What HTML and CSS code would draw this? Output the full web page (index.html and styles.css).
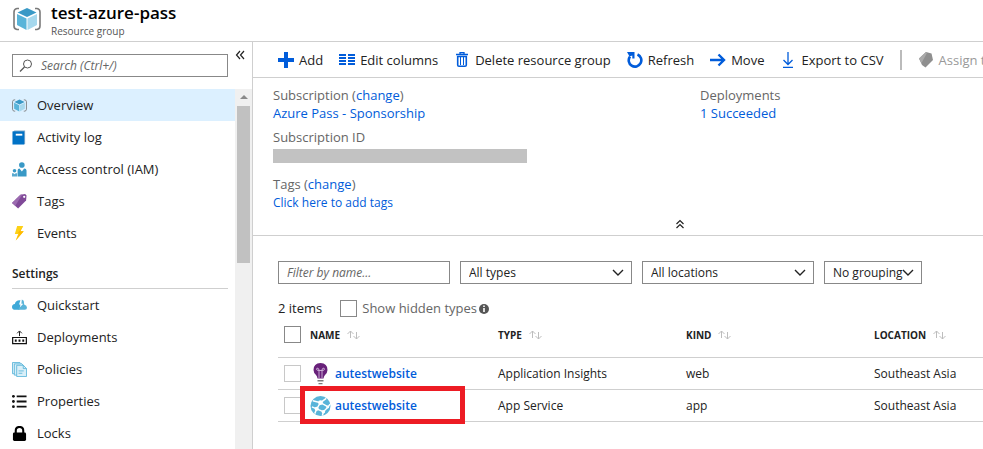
FILE: index.html
```html
<!DOCTYPE html>
<html lang="en">
<head>
<meta charset="utf-8">
<title>test-azure-pass</title>
<link rel="stylesheet" href="styles.css">
</head>
<body>
<svg class="defs" aria-hidden="true">
  <symbol id="group" viewBox="0 0 28 24">
    <path d="M6 1.5H4Q1 2 1 5v14q0 3 3 3.500H6M22 1.500h2q3 .5 3 3.500v14q0 3-3 3.500h-2" fill="none" stroke="#7a7a7a" stroke-width="1.600"/>
    <path d="M14 1 23.500 5.500 14 10 4.500 5.500z" fill="#3999c6"/>
    <path d="M4 7l9.500 4.500V23L4 18z" fill="#59b4d9"/>
    <path d="M24 7l-9.500 4.500V23L24 18z" fill="#a6d8ed"/>
  </symbol>
  <symbol id="chevron" viewBox="0 0 12 8"><path d="M1 1l5 5 5-5" fill="none" stroke="#222" stroke-width="1.400"/></symbol>
  <symbol id="sort" viewBox="0 0 13 10"><path d="M3.500 8V1M.5 4l3-3 3 3M9.500 2v7M6.500 6l3 3 3-3" fill="none" stroke="#bdbdbd"/></symbol>
</svg>

<header class="title-bar">
  <svg class="title-icon"><use href="#group"/></svg>
  <div>
    <h1>test-azure-pass</h1>
    <p>Resource group</p>
  </div>
</header>

<div class="blade">
  <aside class="sidebar">
    <div class="search-row">
      <label class="search">
        <svg viewBox="0 0 14 14"><circle cx="8.500" cy="5" r="4" fill="none" stroke="#555"/><path d="M5.500 8 1 12.500" stroke="#555" stroke-width="1.200"/></svg>
        <input type="search" aria-label="Search" placeholder="Search (Ctrl+/)">
      </label>
      <button class="collapse" type="button" aria-label="Collapse menu">
        <svg viewBox="0 0 10 10"><path d="M5 1 1.500 5 5 9M9 1 5.500 5 9 9" fill="none" stroke="#222" stroke-width="1.200"/></svg>
      </button>
    </div>
    <div class="menu-area">
      <nav class="menu">
        <a class="active" href="#"><svg viewBox="0 0 16 16"><use href="#group" width="16" height="14" y="1"/></svg>Overview</a>
        <a href="#"><svg viewBox="0 0 16 16"><path d="M1 2l1.500-1.500H14V14l-1 1.500z" fill="#7fa9c9"/><path d="M.5 1.500h12.500v14H.5z" fill="#0072c6"/><path d="M4 4h7v2H4z" fill="#fff"/></svg>Activity log</a>
        <a href="#"><svg viewBox="0 0 16 16" fill="#3999c6"><circle cx="10.500" cy="3.200" r="3"/><circle cx="2.700" cy="9.300" r="1.900"/><path d="M6 15V9q0-2 2-2l2.500 3L13 7q2.500 0 2.500 2v6.500H6z"/><path d="M0 15.500V12h1.500l1.200 1L4 12h1.500v3.500z" fill="#59a9cf"/></svg>Access control (IAM)</a>
        <a href="#"><svg viewBox="0 0 16 16"><path d="M0 9.500 9 .8 14 0l1.500 1.500L15 7l-8.500 8.500z" fill="#804998"/><path d="M0 9.500 9 .8l2-.3L3.500 12.500z" fill="#9b6bb0"/><circle cx="13" cy="3" r="1.200" fill="#fff"/></svg>Tags</a>
        <a href="#"><svg viewBox="0 0 16 16"><path d="M5.500 0H12L8.800 5.500h3.700L4 15.500l2.500-7H3z" fill="#fcd116"/><path d="M12 0 8.800 5.500h3.700L4 15.500l3.800-7.800H6z" fill="#ffb900"/></svg>Events</a>
        <h2>Settings</h2>
        <a href="#"><svg viewBox="0 0 16 16"><path d="M3.500 12.500Q0 12.500 0 9.500 0 7 3 6.500 4 2.500 8 2.500h1L7.500 7H9l-1 5.500z" fill="#3fa9d8"/><path d="M10.500 1.500 12.500 3l.5 4q3 1 3 3.500 0 2-2.500 2H6L12 6h-2z" fill="#59b4d9"/></svg>Quickstart</a>
        <a href="#"><svg viewBox="0 0 16 16"><path d="M.7 8h14.600v6.500H.7z" fill="none" stroke="#111" stroke-width="1.300"/><path d="M3 10h2v2.500H3zM7 10h2v2.500H7zM11 10h2v2.500h-2z" fill="#111"/><path d="M8 6.500V1.500M5.500 3.500 8 1l2.500 2.500" fill="none" stroke="#111"/></svg>Deployments</a>
        <a href="#"><svg viewBox="0 0 16 16" fill="#d9eff8" stroke="#59b4d9" stroke-width=".9"><path d="M.5.5h8l2 2v10H.5z"/><path d="M2.500 2h8l2 2v10h-10z"/><path d="M5 3.500h7l3.500 3.500v8.500H5z"/><path d="M12 3.500V7h3.500M7 9.500h5.500M7 12h4" fill="none"/></svg>Policies</a>
        <a href="#"><svg viewBox="0 0 16 16" fill="#111"><circle cx="1.500" cy="2.500" r="1.500"/><circle cx="1.500" cy="8" r="1.500"/><circle cx="1.500" cy="13.500" r="1.500"/><path d="M5 1.500h10.500v2H5zM5 7h10.500v2H5zM5 12.500h10.500v2H5z"/></svg>Properties</a>
        <a href="#"><svg viewBox="0 0 16 16"><path d="M4 8V5q0-4 4-4t4 4v3" fill="none" stroke="#000" stroke-width="2.200"/><rect x="1" y="7" width="14" height="9" rx="1.500"/></svg>Locks</a>
      </nav>
      <div class="scroll-track"><svg viewBox="0 0 8 4"><path d="M0 4 4 0l4 4z" fill="#8a8a8a"/></svg><div class="scroll-thumb"></div></div>
    </div>
  </aside>

  <main class="content">
    <div class="toolbar">
      <button type="button"><svg viewBox="0 0 16 16"><path d="M6 0h4v6h6v4h-6v6H6v-6H0V6h6z"/></svg>Add</button>
      <button type="button"><svg viewBox="0 0 16 16"><path d="M0 2h7v2H0zM0 5h7v2H0zM0 8h7v2H0zM0 11h7v2H0zM9 2h7v2H9zM9 5h7v2H9zM9 8h7v2H9zM9 11h7v2H9z"/></svg>Edit columns</button>
      <button type="button"><svg viewBox="0 0 16 16"><path d="M2 2.500h12M6 2V.7h4V2" fill="none" stroke="#015cda" stroke-width="1.300"/><path d="M3.700 4.500h8.600V13q0 1.300-1.300 1.300H5Q3.700 14.300 3.700 13z" fill="none" stroke="#015cda" stroke-width="1.600"/><path d="M6.500 5v8M9.500 5v8" stroke="#015cda"/></svg>Delete resource group</button>
      <button type="button"><svg viewBox="0 0 16 16"><path d="M3 4.500A6.300 6.300 0 1 0 10.500 2.500" fill="none" stroke="#015cda" stroke-width="2.600"/><path d="M0 0h7.500v6.500H5.300V3.500L2.500 4.500z"/></svg>Refresh</button>
      <button type="button"><svg viewBox="0 0 16 16"><path d="M0 8h14M8.500 2.500 14 8l-5.500 5.500" fill="none" stroke="#015cda" stroke-width="2.400"/></svg>Move</button>
      <button type="button"><svg viewBox="0 0 16 16"><path d="M8 0v12M3.500 8 8 12.500 12.500 8M3 15.300h10" fill="none" stroke="#015cda" stroke-width="1.300"/></svg>Export to CSV</button>
      <span class="divider"></span>
      <button type="button" disabled><svg viewBox="0 0 16 16"><path d="M1 6.500 8 0l5.500 1.500L15 8l-7.500 7.500L4 13z" fill="#8f8f8f"/><path d="M1 6.500 8 0l1 1-5.500 10z" fill="#aaa"/></svg>Assign tags</button>
    </div>

    <section class="essentials">
      <dl class="facts">
        <div><dt>Subscription (<a href="#">change</a>)</dt><dd><a href="#">Azure Pass - Sponsorship</a></dd></div>
        <div><dt>Deployments</dt><dd><a href="#">1 Succeeded</a></dd></div>
        <div><dt>Subscription ID</dt><dd class="redacted"></dd></div>
        <div class="tags"><dt>Tags (<a href="#">change</a>)</dt><dd><a class="small" href="#">Click here to add tags</a></dd></div>
      </dl>
      <button class="fold" type="button" aria-label="Collapse essentials"><svg viewBox="0 0 10 10"><path d="M1.500 5 5 1.500 8.500 5M1.500 9 5 5.500 8.500 9" fill="none" stroke="#222" stroke-width="1.200"/></svg></button>
    </section>

    <section class="resources">
      <div class="filters">
        <input class="name-filter" type="text" aria-label="Filter by name" placeholder="Filter by name...">
        <span class="drop"><select aria-label="Types"><option>All types</option></select><svg><use href="#chevron"/></svg></span>
        <span class="drop"><select aria-label="Locations"><option>All locations</option></select><svg><use href="#chevron"/></svg></span>
        <span class="drop narrow"><select aria-label="Grouping"><option>No grouping</option></select><svg><use href="#chevron"/></svg></span>
      </div>
      <div class="summary">
        <span>2 items</span>
        <label><input type="checkbox">Show hidden types</label>
        <svg viewBox="0 0 10 10"><circle cx="5" cy="5" r="5" fill="#555"/><path d="M4.200 1.500h1.600v1.600H4.200zM4.200 4h1.600v4H4.200z" fill="#fff"/></svg>
      </div>
      <table>
        <thead>
          <tr>
            <th class="pick"><input type="checkbox" aria-label="Select all"></th>
            <th>NAME<svg><use href="#sort"/></svg></th>
            <th>TYPE<svg><use href="#sort"/></svg></th>
            <th>KIND<svg><use href="#sort"/></svg></th>
            <th class="last">LOCATION<svg><use href="#sort"/></svg></th>
          </tr>
        </thead>
        <tbody>
          <tr>
            <td class="pick"><input type="checkbox" aria-label="Select autestwebsite insights"></td>
            <td><a class="resource" href="#"><svg viewBox="0 0 20 22"><path d="M10 0q7 .3 7 7 0 2.500-2.500 5-1.200 1.200-1.500 3.500H7q-.3-2.300-1.500-3.500Q3 9.500 3 7q0-6.700 7-7z" fill="#68217a"/><path d="M8.500 15V7.500M11.500 15V7.500M8.500 7.500h3M8.500 7.500q-2.500 0-2.500-1.300t1.500-1q1 .3 1 2.300M11.500 7.500q2.500 0 2.500-1.300t-1.500-1q-1 .3-1 2.300" fill="none" stroke="#d3b8dc" stroke-width=".9"/><path d="M7 17h6v1.500H7zM8 20h4v1.300H8z" fill="#7a7a7a"/></svg>autestwebsite</a></td>
            <td>Application Insights</td><td>web</td><td>Southeast Asia</td>
          </tr>
          <tr>
            <td class="pick"><input type="checkbox" aria-label="Select autestwebsite app"></td>
            <td class="marked"><a class="resource" href="#"><svg viewBox="0 0 22 22"><circle cx="11" cy="11" r="10.500" fill="#59b4d9"/><path d="M3 5.500 11 7.500 17 3M11 7.500 7 14 2 12M7 14l7 3 5-5-8-4.500M14 17l-1 4M7 14l-2 5M19 12l2-3" fill="none" stroke="#fff" stroke-width="1.500"/><g fill="#fff"><circle cx="11" cy="7.500" r="2.500"/><circle cx="7" cy="14" r="2.200"/><circle cx="14" cy="17" r="1.900"/><circle cx="18.500" cy="12" r="1.500"/></g></svg>autestwebsite</a></td>
            <td>App Service</td><td>app</td><td>Southeast Asia</td>
          </tr>
        </tbody>
      </table>
    </section>
  </main>
</div>
</body>
</html>
```
FILE: styles.css
```css
*, *::after { box-sizing: border-box; }

body {
  margin: 0;
  height: 100vh;
  display: flex;
  flex-direction: column;
  overflow: hidden;
  background: #fff;
  color: #222;
  font: 13px/18px "Open Sans", "Noto Sans", sans-serif;
}

.defs { display: none; }
svg { flex: none; }
a { color: #015cda; text-decoration: none; }
h1, h2, p, dl, dd { margin: 0; }
button, input, select { font: inherit; color: inherit; }
button { padding: 0; border: 0; background: none; }

.title-bar {
  display: flex;
  gap: 9px;
  flex: none;
  height: 42px;
  padding: 3px 12px 0;
  border-bottom: 1px solid #cfcfcf;
}
.title-icon { width: 30px; height: 24px; margin-top: 4px; }
.title-bar h1 { font-size: 17px; line-height: 20px; font-weight: 600; color: #000; }
.title-bar p { font-size: 10px; line-height: 16px; color: #555; }

.blade { display: flex; flex: 1; min-height: 0; }

.sidebar {
  display: flex;
  flex-direction: column;
  flex: none;
  width: 253px;
  border-right: 1px solid #cfcfcf;
}
.search-row { display: flex; gap: 7px; padding: 12px 6px 12px 12px; }
.search {
  display: flex;
  align-items: center;
  gap: 8px;
  width: 216px;
  height: 23px;
  padding-left: 6px;
  border: 1px solid #888;
}
.search svg { width: 14px; height: 14px; }
.search input {
  flex: 1;
  min-width: 0;
  padding: 0;
  border: 0;
  outline: 0;
  background: none;
  font-size: 12px;
}
::placeholder { color: #666; font-style: italic; opacity: 1; }
.collapse { width: 10px; height: 10px; margin-top: -4px; }
.collapse svg { display: block; width: 10px; height: 10px; }

.menu-area { display: flex; flex: 1; min-height: 0; }
.menu { flex: 1; overflow: hidden; }
.menu a {
  display: flex;
  align-items: center;
  gap: 10px;
  height: 32px;
  padding-left: 12px;
  color: #222;
}
.menu a svg { width: 15px; height: 15px; }
.menu .active { background: #dcf0ff; }
.menu h2 {
  margin: 0 7px 0 12px;
  padding: 16px 0 5px;
  border-bottom: 1px solid #cfcfcf;
  font-size: 12px;
  line-height: 18px;
  font-weight: 600;
}
.scroll-track {
  display: flex;
  flex-direction: column;
  align-items: center;
  gap: 7px;
  width: 17px;
  padding-top: 6px;
  background: #f0f0f0;
}
.scroll-track svg { width: 8px; height: 4px; }
.scroll-thumb { width: 13px; height: 157px; background: #c1c1c1; }

.content { flex: 1; min-width: 0; overflow: hidden; }

.toolbar {
  display: flex;
  align-items: center;
  gap: 16px;
  height: 36px;
  padding-left: 25px;
  border-bottom: 1px solid #cfcfcf;
}
.toolbar button {
  display: flex;
  align-items: center;
  gap: 5px;
  flex: none;
  white-space: nowrap;
}
.toolbar svg { width: 16px; height: 16px; fill: #015cda; }
.toolbar button:disabled { color: #999; }
.divider { flex: none; width: 2px; height: 20px; background: #bbb; }

.essentials { height: 158px; padding: 8px 20px 0; border-bottom: 1px solid #cfcfcf; color: #666; }
.facts {
  display: grid;
  grid-template-columns: 427px 1fr;
  row-gap: 6px;
  line-height: 18px;
}
.facts div:nth-child(n+3) { grid-column: 1; }
.redacted { width: 254px; height: 14px; margin-top: 3px; background: #c2c2c2; }
.tags { margin-top: 6px; }
.small { font-size: 12px; }
.fold { display: block; margin: 7px 0 0 402px; }
.fold svg { display: block; width: 10px; height: 10px; }

.resources { padding: 25px 0 0 25px; }
.filters { display: flex; gap: 10px; font-size: 12px; }
.name-filter, .drop { width: 172px; height: 23px; }
.name-filter { padding: 0 8px; border: 1px solid #888; }
.drop { position: relative; }
.drop select {
  width: 100%;
  height: 100%;
  padding: 0 8px;
  border: 1px solid #888;
  border-radius: 0;
  background: #fff;
  appearance: none;
}
.drop svg { position: absolute; right: 8px; top: 8px; width: 12px; height: 8px; pointer-events: none; }
.drop.narrow { width: 98px; }

.summary { display: flex; align-items: center; height: 18px; margin-top: 15px; }
.summary label { display: flex; align-items: center; gap: 5px; margin-left: 18px; color: #666; }
.summary svg { width: 10px; height: 10px; margin: 2px 0 0 2px; }

input[type="checkbox"] {
  display: block;
  width: 17px;
  height: 17px;
  margin: 0;
  border: 1px solid #888;
  background: #fff;
  appearance: none;
}

table { width: 100%; table-layout: fixed; border-collapse: collapse; }
th, td { padding: 0; text-align: left; border-bottom: 1px solid #cfcfcf; }
th { width: 188px; height: 40px; padding-bottom: 4px; font-size: 10px; font-weight: 700; }
th.pick { width: 32px; }
th.last { width: auto; }
th svg { width: 13px; height: 10px; margin-left: 7px; vertical-align: -1px; }
td { height: 32px; padding-top: 2px; font-size: 12px; }
.pick { padding-top: 0; padding-left: 6px; }
td input[type="checkbox"] { border-color: #c8c8c8; }
.resource { display: flex; align-items: center; gap: 4px; font-weight: 600; }
.resource svg { width: 21px; height: 22px; }

.marked { position: relative; }
.marked::after {
  content: "";
  position: absolute;
  left: -10px;
  top: -4px;
  width: 165px;
  height: 38px;
  border: 5px solid #ed1c24;
  pointer-events: none;
}
```
